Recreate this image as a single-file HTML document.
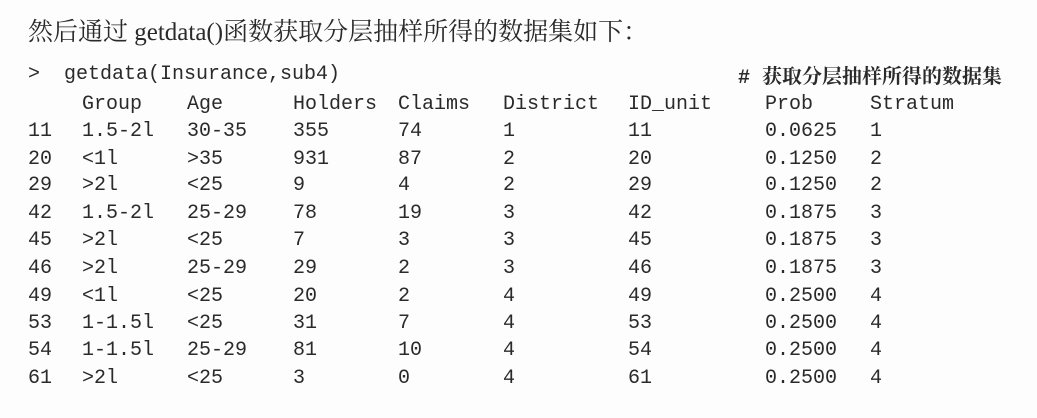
<!DOCTYPE html>
<html><head><meta charset="utf-8"><style>
body{margin:0;width:1037px;height:418px;background:#fdfdfd;position:relative;overflow:hidden;color:#2a2a2a}
.t{position:absolute;left:28px;top:12px;font:25px "Liberation Serif","Noto Serif CJK SC",serif;white-space:nowrap}
.m{position:absolute;font:20px "Liberation Mono",monospace;white-space:pre;line-height:20px}
.c{position:absolute;left:738px;top:60px;font:bold 20px "Liberation Mono","Noto Serif CJK SC",serif;white-space:pre}
</style></head><body>
<div class="t">然后通过 getdata()函数获取分层抽样所得的数据集如下：</div>
<div class="m" style="left:28px;top:65px">&gt;  getdata(Insurance,sub4)</div>
<div class="c"># 获取分层抽样所得的数据集</div>
<div id="g"></div>
<script>
var cols=[28,82,187,293,398,503,628,765,870];
var rows=[[105,["","Group","Age","Holders","Claims","District","ID_unit","Prob","Stratum"]],
[132,["11","1.5-2l","30-35","355","74","1","11","0.0625","1"]],
[160,["20","<1l",">35","931","87","2","20","0.1250","2"]],
[186,["29",">2l","<25","9","4","2","29","0.1250","2"]],
[214,["42","1.5-2l","25-29","78","19","3","42","0.1875","3"]],
[241,["45",">2l","<25","7","3","3","45","0.1875","3"]],
[269,["46",">2l","25-29","29","2","3","46","0.1875","3"]],
[297,["49","<1l","<25","20","2","4","49","0.2500","4"]],
[324,["53","1-1.5l","<25","31","7","4","53","0.2500","4"]],
[351,["54","1-1.5l","25-29","81","10","4","54","0.2500","4"]],
[379,["61",">2l","<25","3","0","4","61","0.2500","4"]]];
var h="";
rows.forEach(function(r){r[1].forEach(function(t,i){h+='<div class="m" style="left:'+cols[i]+'px;top:'+(r[0]-10)+'px">'+t.replace(/</g,"&lt;").replace(/>/g,"&gt;")+'</div>';});});
document.getElementById("g").innerHTML=h;
</script>
</body></html>
